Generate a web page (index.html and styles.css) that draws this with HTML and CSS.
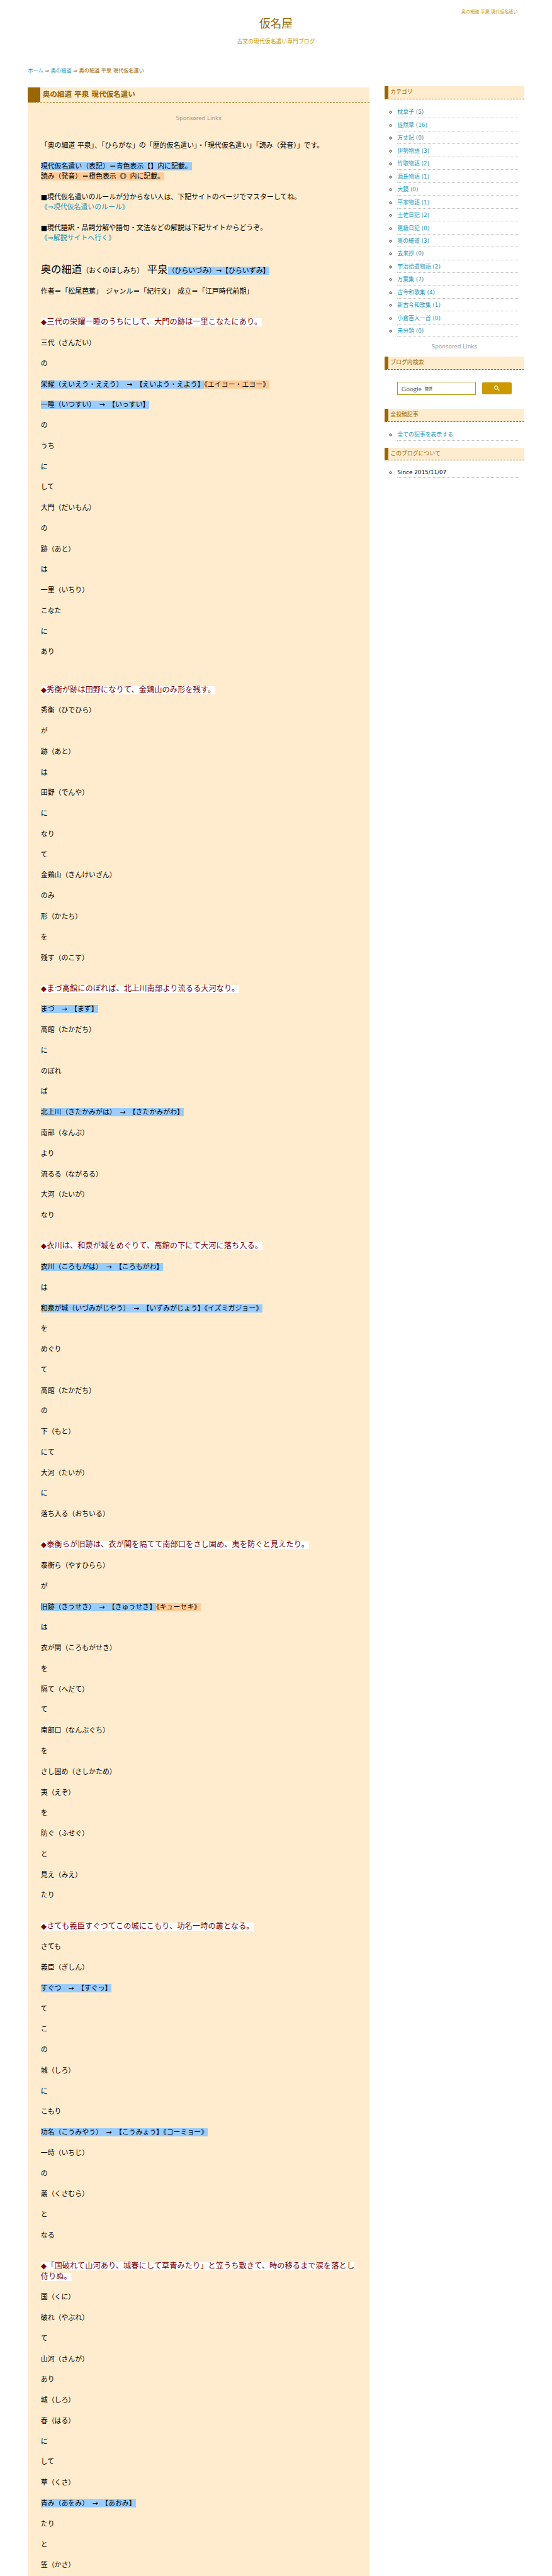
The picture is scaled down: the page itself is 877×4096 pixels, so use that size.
FILE: index.html
```html
<!DOCTYPE html>
<html lang="ja">
<head>
  <meta charset="UTF-8">
  <meta name="viewport" content="width=device-width, initial-scale=1.0">
  <title>奥の細道 平泉 現代仮名遣い | 仮名屋</title>
  <link rel="stylesheet" href="styles.css">
</head>
<body>
  <div class="wrap">
    <header class="header">
      <p class="outline">奥の細道 平泉 現代仮名遣い</p>
      <h1 class="site-title">仮名屋</h1>
      <p class="site-desc">古文の現代仮名遣い専門ブログ</p>
    </header>

    <nav class="breadcrumb"><a href="#">ホーム</a> ⇒ <a href="#">奥の細道</a> ⇒ 奥の細道 平泉 現代仮名遣い</nav>

    <div class="columns">
      <main class="main">
        <h2 class="entry-title">奥の細道 平泉 現代仮名遣い</h2>
        <div class="sponsored">Sponsored Links</div>

        <div class="entry">
          <p>「奥の細道 平泉」、「ひらがな」の「歴的仮名遣い」・「現代仮名遣い」「読み（発音）」です。</p>
          <p><span class="blue">現代仮名遣い（表記）＝青色表示【】内に記載。</span><br><span class="orange">読み（発音）＝橙色表示《》内に記載。</span></p>
          <p>■現代仮名遣いのルールが分からない人は、下記サイトのページでマスターしてね。<br><a href="#">《⇒現代仮名遣いのルール》</a></p>
          <p>■現代語訳・品詞分解や語句・文法などの解説は下記サイトからどうぞ。<br><a href="#">《⇒解説サイトへ行く》</a></p>

          <p class="work"><span class="big">奥の細道</span>（おくのほしみち）　<span class="big">平泉</span><span class="blue">（ひらいづみ）→【ひらいずみ】</span></p>
          <p>作者＝「松尾芭蕉」　ジャンル＝「紀行文」　成立＝「江戸時代前期」</p>

          <p class="phrase"><span><b>◆三代の栄耀一睡のうちにして、大門の跡は一里こなたにあり。</b></span></p>
          <p>三代（さんだい）</p>
          <p>の</p>
          <p><span class="blue">栄耀（えいえう・ええう）　→　【えいよう・えよう】</span><span class="orange">《エイヨー・エヨー》</span></p>
          <p><span class="blue">一睡（いつすい）　→　【いっすい】</span></p>
          <p>の</p>
          <p>うち</p>
          <p>に</p>
          <p>して</p>
          <p>大門（だいもん）</p>
          <p>の</p>
          <p>跡（あと）</p>
          <p>は</p>
          <p>一里（いちり）</p>
          <p>こなた</p>
          <p>に</p>
          <p>あり</p>

          <p class="phrase wide"><span><b>◆秀衡が跡は田野になりて、金鶏山のみ形を残す。</b></span></p>
          <p>秀衡（ひでひら）</p>
          <p>が</p>
          <p>跡（あと）</p>
          <p>は</p>
          <p>田野（でんや）</p>
          <p>に</p>
          <p>なり</p>
          <p>て</p>
          <p>金鶏山（きんけいざん）</p>
          <p>のみ</p>
          <p>形（かたち）</p>
          <p>を</p>
          <p>残す（のこす）</p>

          <p class="phrase"><span><b>◆まづ高館にのぼれば、北上川南部より流るる大河なり。</b></span></p>
          <p><span class="blue">まづ　→　【まず】</span></p>
          <p>高館（たかだち）</p>
          <p>に</p>
          <p>のぼれ</p>
          <p>ば</p>
          <p><span class="blue">北上川（きたかみがは）　→　【きたかみがわ】</span></p>
          <p>南部（なんぶ）</p>
          <p>より</p>
          <p>流るる（ながるる）</p>
          <p>大河（たいが）</p>
          <p>なり</p>

          <p class="phrase"><span><b>◆衣川は、和泉が城をめぐりて、高館の下にて大河に落ち入る。</b></span></p>
          <p><span class="blue">衣川（ころもがは）　→　【ころもがわ】</span></p>
          <p>は</p>
          <p><span class="blue">和泉が城（いづみがじやう）　→　【いずみがじょう】《イズミガジョー》</span></p>
          <p>を</p>
          <p>めぐり</p>
          <p>て</p>
          <p>高館（たかだち）</p>
          <p>の</p>
          <p>下（もと）</p>
          <p>にて</p>
          <p>大河（たいが）</p>
          <p>に</p>
          <p>落ち入る（おちいる）</p>

          <p class="phrase"><span><b>◆泰衡らが旧跡は、衣が関を隔てて南部口をさし固め、夷を防ぐと見えたり。</b></span></p>
          <p>泰衡ら（やすひらら）</p>
          <p>が</p>
          <p><span class="blue">旧跡（きうせき）　→　【きゅうせき】</span><span class="orange">《キューセキ》</span></p>
          <p>は</p>
          <p>衣が関（ころもがせき）</p>
          <p>を</p>
          <p>隔て（へだて）</p>
          <p>て</p>
          <p>南部口（なんぶぐち）</p>
          <p>を</p>
          <p>さし固め（さしかため）</p>
          <p>夷（えぞ）</p>
          <p>を</p>
          <p>防ぐ（ふせぐ）</p>
          <p>と</p>
          <p>見え（みえ）</p>
          <p>たり</p>

          <p class="phrase"><span><b>◆さても義臣すぐつてこの城にこもり、功名一時の叢となる。</b></span></p>
          <p>さても</p>
          <p>義臣（ぎしん）</p>
          <p><span class="blue">すぐつ　→　【すぐっ】</span></p>
          <p>て</p>
          <p>こ</p>
          <p>の</p>
          <p>城（しろ）</p>
          <p>に</p>
          <p>こもり</p>
          <p><span class="blue">功名（こうみやう）　→　【こうみょう】《コーミョー》</span></p>
          <p>一時（いちじ）</p>
          <p>の</p>
          <p>叢（くさむら）</p>
          <p>と</p>
          <p>なる</p>

          <p class="phrase"><span><b>◆「国破れて山河あり、城春にして草青みたり」と笠うち敷きて、時の移るまで涙を落とし侍りぬ。</b></span></p>
          <p>国（くに）</p>
          <p>破れ（やぶれ）</p>
          <p>て</p>
          <p>山河（さんが）</p>
          <p>あり</p>
          <p>城（しろ）</p>
          <p>春（はる）</p>
          <p>に</p>
          <p>して</p>
          <p>草（くさ）</p>
          <p><span class="blue">青み（あをみ）　→　【あおみ】</span></p>
          <p>たり</p>
          <p>と</p>
          <p>笠（かさ）</p>
        </div>
      </main>

      <aside class="side">
        <h3 class="side-title">カテゴリ</h3>
        <ul class="side-list">
          <li><a href="#">枕草子 (5)</a></li>
          <li><a href="#">徒然草 (16)</a></li>
          <li><a href="#">方丈記 (0)</a></li>
          <li><a href="#">伊勢物語 (3)</a></li>
          <li><a href="#">竹取物語 (2)</a></li>
          <li><a href="#">源氏物語 (1)</a></li>
          <li><a href="#">大鏡 (0)</a></li>
          <li><a href="#">平家物語 (1)</a></li>
          <li><a href="#">土佐日記 (2)</a></li>
          <li><a href="#">更級日記 (0)</a></li>
          <li><a href="#">奥の細道 (3)</a></li>
          <li><a href="#">去来抄 (0)</a></li>
          <li><a href="#">宇治拾遺物語 (2)</a></li>
          <li><a href="#">万葉集 (7)</a></li>
          <li><a href="#">古今和歌集 (4)</a></li>
          <li><a href="#">新古今和歌集 (1)</a></li>
          <li><a href="#">小倉百人一首 (0)</a></li>
          <li><a href="#">未分類 (0)</a></li>
        </ul>
        <div class="side-sponsored">Sponsored Links</div>

        <h3 class="side-title">ブログ内検索</h3>
        <div class="search">
          <div class="search-box"><span class="google">Google</span><span class="by">提供</span></div>
          <button class="search-btn" aria-label="検索">
            <svg viewBox="0 0 13 13"><path fill="#fff" d="m4.8495 7.8226c0.82666 0 1.5262-0.29146 2.0985-0.87438 0.57232-0.58292 0.86378-1.2877 0.87438-2.1144 0.010599-0.82666-0.28086-1.5262-0.87438-2.0985-0.59352-0.57232-1.293-0.86378-2.0985-0.87438-0.8055-0.010599-1.5103 0.28086-2.1144 0.87438-0.60414 0.59352-0.8956 1.293-0.87438 2.0985 0.021197 0.8055 0.31266 1.5103 0.87438 2.1144 0.56172 0.60414 1.2665 0.8956 2.1144 0.87438zm4.4695 0.2115 3.681 3.6819-1.259 1.284-3.6817-3.7 0.0019784-0.69479-0.090043-0.098846c-0.87973 0.76087-1.92 1.1413-3.1207 1.1413-1.3553 0-2.5025-0.46363-3.4417-1.3909s-1.4088-2.0686-1.4088-3.4239c0-1.3553 0.4696-2.4966 1.4088-3.4239 0.9392-0.92727 2.0864-1.3969 3.4417-1.4088 1.3553-0.011889 2.4906 0.45771 3.406 1.4088 0.9154 0.95107 1.379 2.0924 1.3909 3.4239 0 1.2126-0.38043 2.2588-1.1413 3.1385l0.098834 0.090049z"/></svg>
          </button>
        </div>

        <h3 class="side-title">全投稿記事</h3>
        <ul class="side-list">
          <li><a href="#">全ての記事を表示する</a></li>
        </ul>

        <h3 class="side-title about">このブログについて</h3>
        <ul class="side-list">
          <li class="since">Since 2015/11/07</li>
        </ul>
      </aside>
    </div>
  </div>
</body>
</html>
```

FILE: styles.css
```css
html {
  background: #fff;
  font-size: 6.8267px;
}
body {
  margin: 0;
  background: #fff;
  color: #000;
  font-family: "DejaVu Sans", "Noto Sans CJK JP", sans-serif;
  font-size: 1.3rem;
}
h1, h2, h3, p, ul {
  margin: 0;
  padding: 0;
  font-weight: normal;
}
a {
  color: #2299bb;
  text-decoration: none;
}
.wrap {
  width: 115.5rem;
  height: 4096px;
  margin: 0 auto;
  overflow: hidden;
}

/* header */
.header {
  padding-top: 2rem;
  text-align: center;
}
.outline {
  padding-right: 1.5rem;
  text-align: right;
  font-size: 1.04rem;
  line-height: 1.6rem;
  color: #cc9900;
}
.site-title {
  margin-top: 0.5rem;
  font-size: 2.6rem;
  line-height: 3rem;
  color: #996600;
}
.site-desc {
  margin-top: 1.7rem;
  line-height: 2rem;
  color: #cc9900;
}
.breadcrumb {
  margin-top: 4.8rem;
  font-size: 1.2rem;
  line-height: 2rem;
  color: #996600;
}
.columns {
  display: flex;
  justify-content: space-between;
  align-items: flex-start;
  margin-top: 2.5rem;
}

/* main column */
.main {
  width: 79.5rem;
  min-height: 579.7rem;
  margin-top: 0.2rem;
  background: #ffebcd;
}
.entry-title {
  box-sizing: border-box;
  height: 3.6rem;
  padding-left: 0.5rem;
  border-left: 3rem solid #996600;
  border-bottom: 1px dashed #996600;
  font-size: 1.7rem;
  font-weight: bold;
  line-height: 3.5rem;
  color: #996600;
}
.sponsored {
  margin: 2.5rem 0 4rem;
  line-height: 2.4rem;
  text-align: center;
  color: #999;
}
.entry {
  padding: 0 3rem;
  font-size: 1.6rem;
  line-height: 2.4rem;
}
.entry p {
  margin-bottom: 2.4rem;
}
.entry p:last-child {
  margin-bottom: 0;
}
.entry .work {
  margin-top: 4.92rem;
}
.entry .phrase {
  margin-top: 4.8rem;
}
.entry .wide {
  margin-top: 6.4rem;
}
.phrase span {
  background: #fff;
  color: #800000;
}
.phrase b {
  font-size: 1.8rem;
  font-weight: normal;
  line-height: 1;
}
.big {
  font-size: 2.4rem;
}
.blue {
  background: #99ccff;
}
.orange {
  background: #ffcc99;
}

/* side column */
.side {
  width: 32.5rem;
}
.side-title {
  box-sizing: border-box;
  height: 3rem;
  padding-left: 0.5rem;
  border-left: 1rem solid #996600;
  border-bottom: 1px dashed #996600;
  background: #ffebcd;
  font-size: 1.3rem;
  line-height: 2.9rem;
  color: #996600;
}
.side-list {
  margin: 1.5rem 1.5rem 0 3rem;
  list-style: circle;
}
.side-list li {
  box-sizing: border-box;
  height: 3rem;
  padding-top: 0.65rem;
  border-bottom: 1px dotted #bbb;
  line-height: 2rem;
}
.side-list .since {
  height: 2.6rem;
  line-height: 1.4rem;
}
.side-sponsored {
  padding: 1.3rem 0 1.2rem;
  line-height: 2rem;
  text-align: center;
  color: #999;
}
.search {
  display: flex;
  align-items: center;
  gap: 1.4rem;
  margin: 2.9rem 0 3.3rem 2.9rem;
}
.search-box {
  display: flex;
  align-items: center;
  gap: 0.7rem;
  box-sizing: border-box;
  width: 18.4rem;
  height: 3rem;
  padding-left: 0.9rem;
  border: 1px solid #bb9911;
  color: #666;
}
.google {
  font-family: Lato, sans-serif;
  font-size: 1.5rem;
}
.by {
  font-size: 0.9rem;
  font-weight: bold;
}
.search-btn {
  display: flex;
  align-items: center;
  justify-content: center;
  width: 6.9rem;
  height: 2.7rem;
  padding: 0;
  border: none;
  border-radius: 2px;
  background: #cc9900;
}
.search-btn svg {
  width: 1.3rem;
  height: 1.3rem;
}
.about {
  margin-top: 1.5rem;
}
```
